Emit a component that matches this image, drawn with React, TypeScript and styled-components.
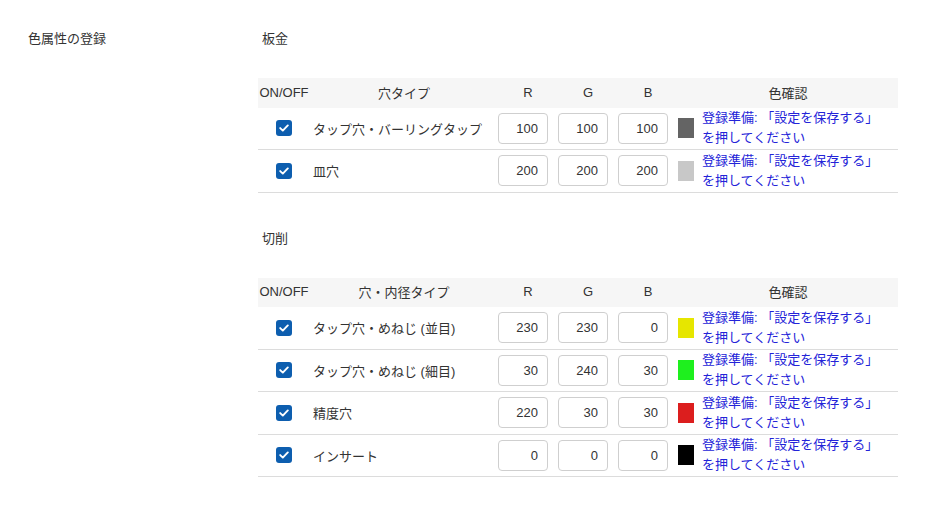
import React from "react"
import styled, { createGlobalStyle } from "styled-components"

const GlobalStyle = createGlobalStyle`
  body {
    margin: 0;
    background: #fff;
    font-family: "Liberation Sans", "Noto Sans CJK JP", sans-serif;
    font-size: 13px;
    color: #333;
  }
`

interface IHole {
  label: string
  r: number
  g: number
  b: number
}

const sheetMetal: IHole[] = [
  { label: "タップ穴・バーリングタップ", r: 100, g: 100, b: 100 },
  { label: "皿穴", r: 200, g: 200, b: 200 }
]

const cutting: IHole[] = [
  { label: "タップ穴・めねじ (並目)", r: 230, g: 230, b: 0 },
  { label: "タップ穴・めねじ (細目)", r: 30, g: 240, b: 30 },
  { label: "精度穴", r: 220, g: 30, b: 30 },
  { label: "インサート", r: 0, g: 0, b: 0 }
]

const Page = styled.div`
  display: flex;
  padding: 29px 0 0 28px;
`

const SideLabel = styled.div`
  width: 230px;
  line-height: 20px;
`

const Content = styled.div`
  width: 640px;
`

const Section = styled.section`
  margin-bottom: 36px;
`

const SectionTitle = styled.div`
  line-height: 20px;
  padding-left: 4px;
  margin-bottom: 29px;
`

const cols = "52px 188px 60px 60px 60px 220px"

const HeadRow = styled.div`
  display: grid;
  grid-template-columns: ${cols};
  height: 29.5px;
  align-items: center;
  background: #f6f6f6;
`

const HeadCell = styled.div`
  text-align: center;
  white-space: nowrap;
  padding-bottom: 1px;
`

const Row = styled.div`
  display: grid;
  grid-template-columns: ${cols};
  height: 42.5px;
  box-sizing: border-box;
  align-items: center;
  border-bottom: 1px solid #dcdcdc;
`

const CheckCell = styled.div`
  display: flex;
  justify-content: center;
`

const CheckBox = styled.span`
  width: 16px;
  height: 16px;
  border-radius: 3px;
  background: #0d5eaf;
  display: flex;
  align-items: center;
  justify-content: center;
`

const TypeCell = styled.div`
  padding-left: 3px;
  white-space: nowrap;
`

const NumInput = styled.input`
  width: 50px;
  height: 31px;
  box-sizing: border-box;
  border: 1px solid #cfcfcf;
  border-radius: 4px;
  padding: 0 9px 0 4px;
  text-align: right;
  font-family: inherit;
  font-size: 13px;
  color: #333;
  background: #fff;
  outline: none;
`

const ColorCell = styled.div`
  display: flex;
  align-items: center;
  gap: 8px;
`

const Swatch = styled.span<{ rgb: string }>`
  width: 16px;
  height: 20px;
  flex: none;
  background: ${props => props.rgb};
`

const Notice = styled.span`
  color: #2323d8;
  line-height: 20px;
  white-space: nowrap;
`

const Check = () => (
  <CheckBox>
    <svg width="10" height="8" viewBox="0 0 10 8">
      <path
        d="M1.2 4.1 L3.8 6.6 L8.8 1.4"
        fill="none"
        stroke="#fff"
        strokeWidth="1.9"
        strokeLinecap="round"
        strokeLinejoin="round"
      />
    </svg>
  </CheckBox>
)

const HoleTable = ({ typeHeader, rows }: { typeHeader: string; rows: IHole[] }) => (
  <div>
    <HeadRow>
      <HeadCell>ON/OFF</HeadCell>
      <HeadCell>{typeHeader}</HeadCell>
      <HeadCell>R</HeadCell>
      <HeadCell>G</HeadCell>
      <HeadCell>B</HeadCell>
      <HeadCell>色確認</HeadCell>
    </HeadRow>
    {rows.map(row => (
      <Row key={row.label}>
        <CheckCell>
          <Check />
        </CheckCell>
        <TypeCell>{row.label}</TypeCell>
        <div>
          <NumInput defaultValue={row.r} />
        </div>
        <div>
          <NumInput defaultValue={row.g} />
        </div>
        <div>
          <NumInput defaultValue={row.b} />
        </div>
        <ColorCell>
          <Swatch rgb={`rgb(${row.r}, ${row.g}, ${row.b})`} />
          <Notice>
            登録準備: 「設定を保存する」
            <br />
            を押してください
          </Notice>
        </ColorCell>
      </Row>
    ))}
  </div>
)

export default function App() {
  return (
    <>
      <GlobalStyle />
      <Page>
        <SideLabel>色属性の登録</SideLabel>
        <Content>
          <Section>
            <SectionTitle>板金</SectionTitle>
            <HoleTable typeHeader="穴タイプ" rows={sheetMetal} />
          </Section>
          <Section>
            <SectionTitle>切削</SectionTitle>
            <HoleTable typeHeader="穴・内径タイプ" rows={cutting} />
          </Section>
        </Content>
      </Page>
    </>
  )
}
